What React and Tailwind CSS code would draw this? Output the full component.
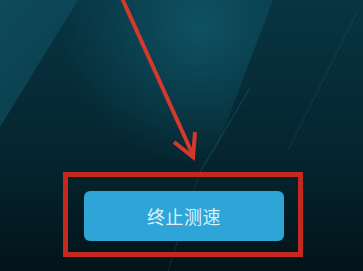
export default function App() {
  return (
    <div className="relative w-[363px] h-[271px] overflow-hidden bg-[#05222c] font-['Noto_Sans_CJK_SC','Noto_Sans',sans-serif]">
      {/* wallpaper + annotation arrow */}
      <svg className="absolute inset-0" width="363" height="271" viewBox="0 0 363 271">
        <defs>
          <linearGradient id="bg" x1="0" y1="0" x2="0" y2="1">
            <stop offset="0" stopColor="#073442" />
            <stop offset="0.55" stopColor="#052630" />
            <stop offset="1" stopColor="#03141a" />
          </linearGradient>
          <radialGradient id="glow" cx="200" cy="25" r="140" gradientUnits="userSpaceOnUse">
            <stop offset="0" stopColor="#0f5566" stopOpacity="0.9" />
            <stop offset="0.6" stopColor="#0f5566" stopOpacity="0.35" />
            <stop offset="1" stopColor="#0f5566" stopOpacity="0" />
          </radialGradient>
          <linearGradient id="left" x1="0" y1="0" x2="1" y2="1">
            <stop offset="0" stopColor="#0f4e5f" stopOpacity="0.85" />
            <stop offset="1" stopColor="#0f4e5f" stopOpacity="0.45" />
          </linearGradient>
          <clipPath id="glowClip">
            <polygon points="40,0 273,0 205,180 40,180" />
          </clipPath>
        </defs>
        <rect width="363" height="271" fill="url(#bg)" />
        <polygon points="0,0 78,0 0,127" fill="url(#left)" />
        <rect width="363" height="271" fill="url(#glow)" clipPath="url(#glowClip)" />
        <line x1="250" y1="88" x2="200" y2="172" stroke="#3a8aa2" strokeOpacity="0.3" strokeWidth="1" />
        <line x1="200" y1="172" x2="168" y2="271" stroke="#3a8aa2" strokeOpacity="0.2" strokeWidth="1" />
        <line x1="358" y1="10" x2="288" y2="150" stroke="#3a8aa2" strokeOpacity="0.18" strokeWidth="1" />
        <line x1="121" y1="-4" x2="192" y2="153" stroke="#d6382b" strokeWidth="4" />
        <polyline points="174,142 193,157 195,132" fill="none" stroke="#d6382b" strokeWidth="4" strokeLinejoin="miter" />
      </svg>

      <div className="relative flex h-full flex-col justify-end items-start pb-[14px] pl-[63px]">
        <div className="w-[240px] h-[85px] border-[5px] border-[#c4281f] flex items-center justify-center pt-[2px] pl-[2px]">
          <button className="w-[200px] h-[50px] rounded-[6px] bg-[#2fa5d7] text-[18px] leading-none text-[#dcf1fa] tracking-[0.5px]">
            终止测速
          </button>
        </div>
      </div>
    </div>
  );
}
